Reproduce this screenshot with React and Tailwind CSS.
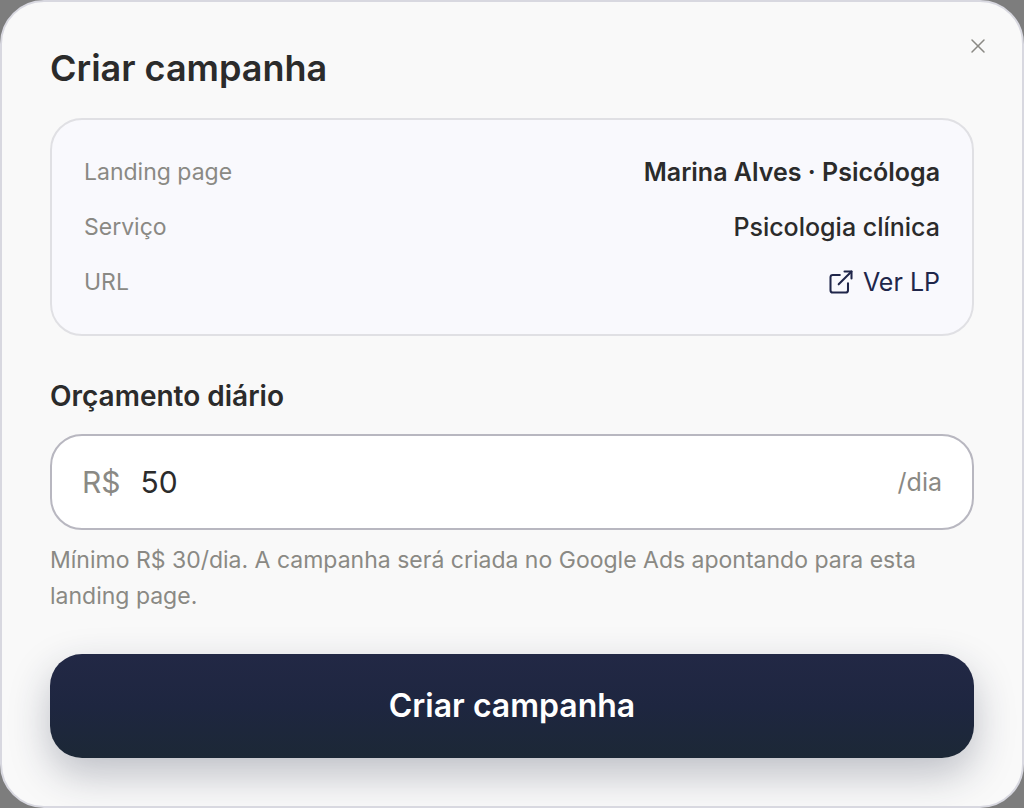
import React, { useState } from 'react';
import { ExternalLink, X } from 'lucide-react';

const campaign = {
  landingPage: 'Marina Alves · Psicóloga',
  service: 'Psicologia clínica',
  url: '#',
};

const SummaryRow = ({ label, children }) => (
  <div className="flex items-center justify-between gap-4">
    <dt className="text-[23px] leading-10 text-[#8a8984]">{label}</dt>
    <dd className="text-[25px] leading-10 text-[#2b2b2b]">{children}</dd>
  </div>
);

const BudgetField = ({ value, onChange }) => (
  <div className="mt-10">
    <label htmlFor="daily-budget" className="block text-[28px] leading-10 font-semibold text-[#2b2b2b]">
      Orçamento diário
    </label>
    <div className="mt-[18px] flex items-center gap-5 rounded-[32px] border-2 border-[#b8b7c0] bg-white px-[30px] py-[26px]">
      <span className="text-[30px] leading-10 text-[#8a8984]">R$</span>
      <input
        id="daily-budget"
        type="text"
        inputMode="numeric"
        value={value}
        onChange={(e) => onChange(e.target.value)}
        className="h-10 min-w-0 flex-1 bg-transparent text-[30px] leading-10 text-[#2b2b2b] outline-none"
      />
      <span className="text-[25px] leading-10 text-[#8a8984]">/dia</span>
    </div>
    <p className="mt-3 text-[23px] leading-9 text-[#8a8984]">
      Mínimo R$ 30/dia. A campanha será criada no Google Ads apontando para esta landing page.
    </p>
  </div>
);

const App = () => {
  const [budget, setBudget] = useState('50');

  return (
    <div className="min-h-screen bg-[#7d7d7d] font-['Inter','Liberation_Sans',sans-serif]">
      <div
        role="dialog"
        aria-labelledby="dialog-title"
        className="relative min-h-screen overflow-hidden rounded-[44px] border-2 border-[#d8d8e0] bg-[#f9f9f9] p-12"
      >
        <button
          type="button"
          aria-label="Fechar"
          className="absolute top-8 right-8 flex size-6 items-center justify-center text-[#8a8984]"
        >
          <X size={24} strokeWidth={1.5} />
        </button>

        <h2 id="dialog-title" className="text-4xl leading-9 font-semibold text-[#2b2b2b]">
          Criar campanha
        </h2>

        <dl className="mt-8 flex flex-col gap-[15px] rounded-[32px] border-2 border-[#e0e0e4] bg-[#f9f9fd] p-8">
          <SummaryRow label="Landing page">
            <span className="font-semibold">{campaign.landingPage}</span>
          </SummaryRow>
          <SummaryRow label="Serviço">
            <span className="font-medium">{campaign.service}</span>
          </SummaryRow>
          <SummaryRow label="URL">
            <a href={campaign.url} className="flex items-center gap-2 text-[#20264a]">
              <ExternalLink size={28} strokeWidth={1.75} />
              Ver LP
            </a>
          </SummaryRow>
        </dl>

        <BudgetField value={budget} onChange={setBudget} />

        <button
          type="button"
          className="mt-10 w-full rounded-[32px] bg-linear-to-b from-[#222845] via-[#1e2640] to-[#1c2836] py-8 text-[32px] leading-10 font-semibold text-white shadow-[0_16px_40px_rgba(32,38,66,0.28)]"
        >
          Criar campanha
        </button>
      </div>
    </div>
  );
};

export default App;
